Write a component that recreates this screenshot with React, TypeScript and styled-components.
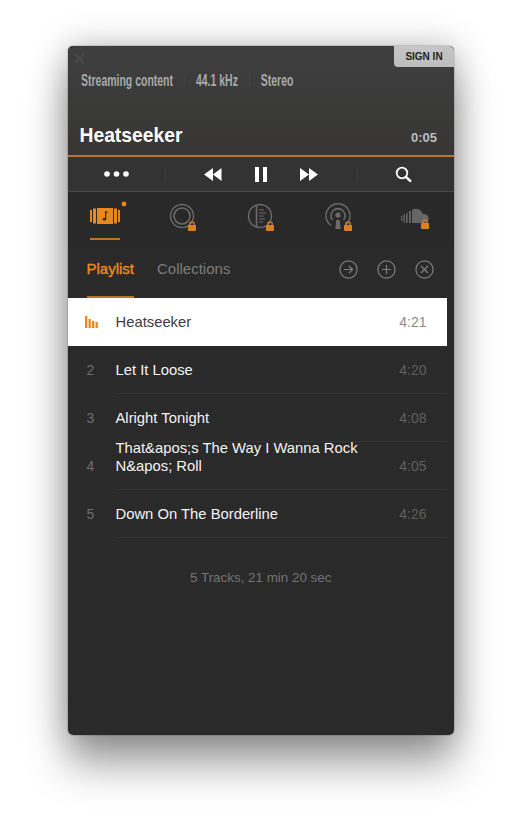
import React from 'react';
import styled, { createGlobalStyle } from 'styled-components';

const ORANGE = '#e8891f';
const RULE = '#b9752b';

const tracks = [
    { no: '1', title: 'Heatseeker', time: '4:21', playing: true },
    { no: '2', title: 'Let It Loose', time: '4:20' },
    { no: '3', title: 'Alright Tonight', time: '4:08' },
    { no: '4', title: 'That&apos;s The Way I Wanna Rock N&apos; Roll', time: '4:05' },
    { no: '5', title: 'Down On The Borderline', time: '4:26' },
];

const GlobalStyle = createGlobalStyle`
    html, body {
        margin: 0;
        background: #fff;
        overflow: hidden;
    }
    body {
        font-family: "Liberation Sans", Arial, sans-serif;
    }
`;

const Page = styled.div`
    width: 521px;
    height: 823px;
    box-sizing: border-box;
    padding: 46px 67px 88px 67.5px;
`;

const Player = styled.div`
    height: 689px;
    display: flex;
    flex-direction: column;
    background: #2a2a2a;
    border-radius: 5px;
    overflow: hidden;
    outline: 1px solid rgba(0, 0, 0, 0.12);
`;

const Shadow = styled.div`
    border-radius: 5px;
    box-shadow: 0 30px 42px rgba(0, 0, 0, 0.36), 0 0 34px rgba(0, 0, 0, 0.26);
`;

const Header = styled.header`
    height: 111px;
    box-sizing: border-box;
    display: flex;
    flex-direction: column;
    background: linear-gradient(#3f3f3f, #373635);
    border-bottom: 2px solid ${RULE};
`;

const TopBar = styled.div`
    height: 21px;
    display: flex;
    justify-content: space-between;
`;

const CloseMark = styled.svg`
    margin: 7px 0 0 6px;
`;

const SignIn = styled.button`
    width: 60px;
    height: 21px;
    padding: 0;
    border: 0;
    border-bottom-left-radius: 4px;
    background: linear-gradient(#c6c6c6, #bdbdbd);
    color: #222;
    font: bold 10px "Liberation Sans", Arial, sans-serif;
`;

// no condensed face is installed, so the bold sans is squeezed to the same width
const MetaRow = styled.div`
    margin: 5px 0 0 13px;
    height: 18px;
    display: flex;
    align-items: center;
    white-space: nowrap;
    font-size: 16px;
    font-weight: bold;
    color: #a9a9a9;
    transform: scaleX(0.655);
    transform-origin: left center;
`;

const MetaItem = styled.span`
    & + &::before {
        content: '';
        display: inline-block;
        width: 1px;
        height: 10px;
        margin: 0 17px;
        background: #4d4d4d;
    }
`;

const TitleRow = styled.div`
    margin: 35px 17px 0 12px;
    display: flex;
    justify-content: space-between;
    align-items: baseline;
`;

const NowTitle = styled.h1`
    margin: 0;
    color: #fff;
    font-size: 19.3px;
    line-height: 22px;
    font-weight: bold;
`;

const Elapsed = styled.span`
    color: #bdbdbd;
    font-size: 13px;
    font-weight: bold;
`;

const Controls = styled.div`
    height: 35px;
    box-sizing: border-box;
    display: flex;
    align-items: center;
    background: #333;
    border-bottom: 1px solid #484848;
`;

const ControlSlot = styled.div<{ $w: number; $divider?: boolean }>`
    width: ${p => p.$w}px;
    height: 14px;
    box-sizing: border-box;
    display: flex;
    align-items: center;
    justify-content: center;
    gap: 33px;
    ${p => p.$divider && 'border-right: 1px solid #3c3c3c;'}
`;

const IconTabs = styled.nav`
    height: 53px;
    display: grid;
    grid-template-columns: repeat(5, 1fr);
    background: #292929;
`;

const IconTab = styled.div<{ $active?: boolean }>`
    display: flex;
    justify-content: center;
    align-items: center;
    height: 48px;
    box-sizing: border-box;
    position: relative;
    padding: ${p => (p.$active ? '0 3px 0 0' : '4px 0 0 2px')};
    ${p =>
        p.$active &&
        `&::after {
            content: '';
            position: absolute;
            left: 22px;
            bottom: 0;
            width: 30px;
            height: 2px;
            background: ${RULE};
        }`}
`;

const TabRow = styled.div`
    height: 53px;
    box-sizing: border-box;
    display: flex;
    align-items: flex-start;
    padding: 0 20px 0 19px;
`;

const Tab = styled.div<{ $active?: boolean }>`
    height: 53px;
    box-sizing: border-box;
    padding-top: 15px;
    margin-right: 23px;
    font-size: 15px;
    line-height: 18px;
    color: ${p => (p.$active ? ORANGE : '#7d7d7d')};
    ${p => p.$active && `-webkit-text-stroke: 0.4px ${ORANGE};`}
    border-bottom: 2px solid ${p => (p.$active ? RULE : 'transparent')};
`;

const TabActions = styled.div`
    margin: 15px 0 0 auto;
    display: flex;
    gap: 19px;
`;

const TrackList = styled.ol`
    list-style: none;
    margin: 0;
    padding: 0;
    width: 379px;
`;

const Row = styled.li<{ $playing?: boolean }>`
    height: 48px;
    display: flex;
    align-items: center;
    background: ${p => (p.$playing ? '#fff' : 'transparent')};
    color: ${p => (p.$playing ? '#3c3c3c' : '#f4f4f4')};
    padding-left: 19px;
`;

const TrackNo = styled.span`
    width: 29px;
    flex: none;
    color: #6f6f6f;
    font-size: 14px;
`;

const BarsIcon = styled.svg`
    display: block;
    margin-left: -2px;
`;

const RowBody = styled.div<{ $line: boolean }>`
    flex: 1;
    height: 100%;
    display: flex;
    align-items: center;
    padding-right: 20px;
    border-bottom: 1px solid ${p => (p.$line ? '#353535' : 'transparent')};
    box-sizing: border-box;
`;

const TitleBox = styled.div`
    width: 252px;
    height: 18px;
    display: flex;
    align-items: flex-end;
    font-size: 14.8px;
    line-height: 18px;
`;

const Duration = styled.span<{ $playing?: boolean }>`
    margin-left: auto;
    font-size: 14px;
    color: ${p => (p.$playing ? '#8a8a8a' : '#5f5f5f')};
`;

const Summary = styled.div`
    margin-top: 33px;
    text-align: center;
    color: #747474;
    font-size: 13.4px;
    line-height: 14px;
`;

// little orange padlock that sits on the locked sources
const Lock = ({ x, y }: { x: number; y: number }) => (
    <g transform={`translate(${x} ${y})`}>
        <path d="M1.8 3V2a2.2 2.2 0 0 1 4.4 0v1" fill="none" stroke="#d97f25" strokeWidth="1.2" />
        <rect x="0" y="3" width="8" height="6" rx="0.8" fill="#d97f25" stroke="none" />
    </g>
);

const MusicIcon = () => (
    <svg width="30" height="26" viewBox="0 0 30 26" overflow="visible">
        <g fill={ORANGE}>
            <rect x="0" y="7" width="2" height="12" />
            <rect x="3" y="5.500" width="3" height="15" />
            <rect x="24" y="5.500" width="3" height="15" />
            <rect x="28" y="7" width="2" height="12" />
            <rect x="7" y="5" width="16" height="16" />
            <circle cx="34" cy="1" r="2.400" />
        </g>
        <path d="M15.600 8.500v7.500" stroke="#2a2a2a" strokeWidth="1.200" />
        <path d="M15.600 8.500l2 1" stroke="#2a2a2a" strokeWidth="1.200" />
        <ellipse cx="14.400" cy="16.200" rx="1.700" ry="1.300" fill="#2a2a2a" />
    </svg>
);

const RingsIcon = () => (
    <svg width="30" height="30" viewBox="0 0 30 30" fill="none" stroke="#6a6a6a">
        <circle cx="13" cy="13" r="11.500" strokeWidth="1.400" />
        <circle cx="13" cy="13" r="8" strokeWidth="1.600" />
        <Lock x={19} y={19} />
    </svg>
);

const ListIcon = () => (
    <svg width="30" height="30" viewBox="0 0 30 30" fill="none" stroke="#6a6a6a">
        <circle cx="13" cy="13" r="11.500" strokeWidth="1.400" />
        <path d="M9.500 3v20" strokeWidth="1.600" />
        <path d="M12 7h5M12 10h7M12 13h5M12 16h6M12 19h4" strokeWidth="1.200" />
        <Lock x={19} y={19} />
    </svg>
);

const PodcastIcon = () => (
    <svg width="30" height="30" viewBox="0 0 30 30" fill="none" stroke="#6a6a6a">
        <path d="M7 22.500a12 12 0 1 1 14 0" strokeWidth="1.400" />
        <path d="M8.500 17a7 7 0 1 1 11 0" strokeWidth="1.600" />
        <circle cx="14" cy="12" r="2.600" fill="#6a6a6a" stroke="none" />
        <path d="M12.200 17h3.600l.8 9h-5.200z" fill="#6a6a6a" stroke="none" />
        <Lock x={20} y={19} />
    </svg>
);

const CloudIcon = () => (
    <svg width="30" height="24" viewBox="0 0 30 24" fill="#666">
        <rect x="0" y="10" width="1.200" height="5" />
        <rect x="2.400" y="8.500" width="1.400" height="8" />
        <rect x="5" y="7" width="1.600" height="10" />
        <rect x="8" y="5" width="1.800" height="12" />
        <path d="M11 17V3.600a8 8 0 0 1 11 4.400 4.500 4.500 0 1 1 2 9z" />
        <Lock x={20} y={14} />
    </svg>
);

const RoundAction = ({ children }: { children: React.ReactNode }) => (
    <svg width="19" height="19" viewBox="0 0 19 19" fill="none" stroke="#7f7f7f" strokeWidth="1.200">
        <circle cx="9.500" cy="9.500" r="8.600" />
        {children}
    </svg>
);

export default function App() {
    return (
        <Page>
            <GlobalStyle />
            <Shadow>
                <Player>
                    <Header>
                        <TopBar>
                            <CloseMark width="11" height="11" viewBox="0 0 11 11">
                                <path d="M1 1l9 9M10 1l-9 9" stroke="#4a4a4a" strokeWidth="1.800" />
                            </CloseMark>
                            <SignIn>SIGN IN</SignIn>
                        </TopBar>
                        <MetaRow>
                            <MetaItem>Streaming content</MetaItem>
                            <MetaItem>44.1 kHz</MetaItem>
                            <MetaItem>Stereo</MetaItem>
                        </MetaRow>
                        <TitleRow>
                            <NowTitle>Heatseeker</NowTitle>
                            <Elapsed>0:05</Elapsed>
                        </TitleRow>
                    </Header>

                    <Controls>
                        <ControlSlot $w={98} $divider>
                            <svg width="25" height="6" viewBox="0 0 25 6" fill="#fff">
                                <circle cx="3" cy="3" r="2.800" />
                                <circle cx="12.500" cy="3" r="2.800" />
                                <circle cx="22" cy="3" r="2.800" />
                            </svg>
                        </ControlSlot>
                        <ControlSlot $w={192} $divider>
                            <svg width="18" height="13" viewBox="0 0 18 13" fill="#fff">
                                <path d="M9 0v13L0 6.500zM17.500 0v13L9 6.500z" />
                            </svg>
                            <svg width="12" height="15" viewBox="0 0 12 15" fill="#fff">
                                <rect x="0" y="0" width="4" height="15" />
                                <rect x="8" y="0" width="4" height="15" />
                            </svg>
                            <svg width="18" height="13" viewBox="0 0 18 13" fill="#fff">
                                <path d="M0 0v13l9-6.500zM9 0v13l9-6.500z" />
                            </svg>
                        </ControlSlot>
                        <ControlSlot $w={92}>
                            <svg width="17" height="17" viewBox="0 0 17 17" fill="none" stroke="#fff">
                                <circle cx="7" cy="7" r="5.300" strokeWidth="1.800" />
                                <path d="M11 11l5 4.600" strokeWidth="2.400" />
                            </svg>
                        </ControlSlot>
                    </Controls>

                    <IconTabs>
                        <IconTab $active>
                            <MusicIcon />
                        </IconTab>
                        <IconTab>
                            <RingsIcon />
                        </IconTab>
                        <IconTab>
                            <ListIcon />
                        </IconTab>
                        <IconTab>
                            <PodcastIcon />
                        </IconTab>
                        <IconTab>
                            <CloudIcon />
                        </IconTab>
                    </IconTabs>

                    <TabRow>
                        <Tab $active>Playlist</Tab>
                        <Tab>Collections</Tab>
                        <TabActions>
                            <RoundAction>
                                <path d="M5 9.500h8.500M10 6l3.500 3.500L10 13" />
                            </RoundAction>
                            <RoundAction>
                                <path d="M9.500 5v9M5 9.500h9" />
                            </RoundAction>
                            <RoundAction>
                                <path d="M6 6l7 7M13 6l-7 7" />
                            </RoundAction>
                        </TabActions>
                    </TabRow>

                    <TrackList>
                        {tracks.map(t => (
                            <Row key={t.no} $playing={t.playing}>
                                <TrackNo>
                                    {t.playing ? (
                                        <BarsIcon width="14" height="12" viewBox="0 0 14 12" fill={ORANGE}>
                                            <rect x="0" y="0" width="2.300" height="12" />
                                            <rect x="3.500" y="3" width="2.300" height="9" />
                                            <rect x="7" y="5" width="2.300" height="7" />
                                            <rect x="10.500" y="6" width="2.300" height="6" />
                                        </BarsIcon>
                                    ) : (
                                        t.no
                                    )}
                                </TrackNo>
                                <RowBody $line={!t.playing}>
                                    <TitleBox>
                                        <span>{t.title}</span>
                                    </TitleBox>
                                    <Duration $playing={t.playing}>{t.time}</Duration>
                                </RowBody>
                            </Row>
                        ))}
                    </TrackList>

                    <Summary>5 Tracks, 21 min 20 sec</Summary>
                </Player>
            </Shadow>
        </Page>
    );
}
